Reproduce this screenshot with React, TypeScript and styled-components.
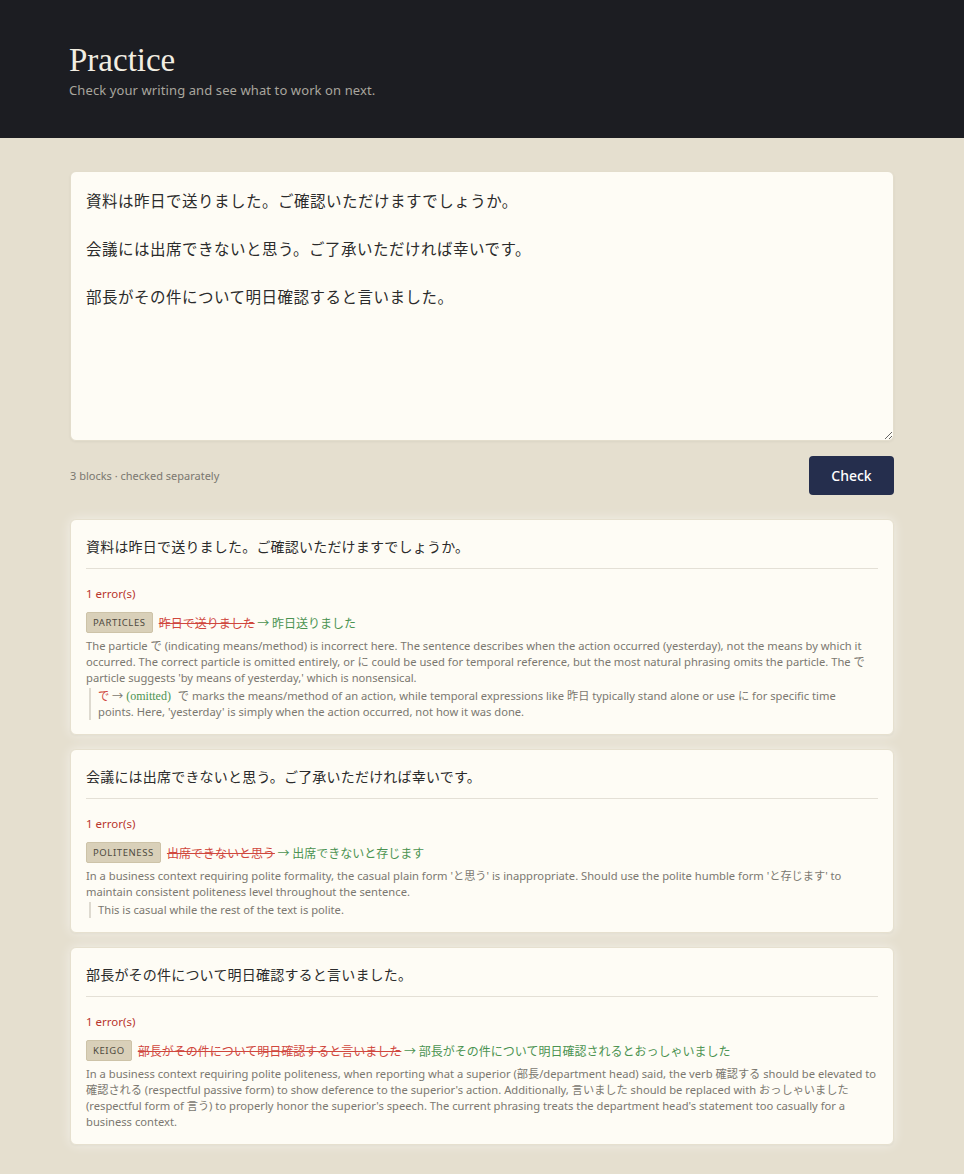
import { FC } from "react";
import styled, { createGlobalStyle } from "styled-components";

const GlobalStyle = createGlobalStyle`
  html, body {
    margin: 0;
    padding: 0;
    background: #e5dfcf;
  }
  body {
    font-family: "Noto Sans", "Noto Sans CJK JP", sans-serif;
    color: #333;
  }
`

interface Issue {
    category: string;
    wrong: string;
    right: string;
    explanation: string;
    note?: { from: string; to: string; text: string };
    plainNote?: string;
}

interface Block {
    sentence: string;
    issues: Issue[];
}

const blocks: Block[] = [
    {
        sentence: "資料は昨日で送りました。ご確認いただけますでしょうか。",
        issues: [
            {
                category: "Particles",
                wrong: "昨日で送りました",
                right: "昨日送りました",
                explanation:
                    "The particle で (indicating means/method) is incorrect here. The sentence describes when the action occurred (yesterday), not the means by which it occurred. The correct particle is omitted entirely, or に could be used for temporal reference, but the most natural phrasing omits the particle. The で particle suggests 'by means of yesterday,' which is nonsensical.",
                note: {
                    from: "で",
                    to: "(omitted)",
                    text: "で marks the means/method of an action, while temporal expressions like 昨日 typically stand alone or use に for specific time points. Here, 'yesterday' is simply when the action occurred, not how it was done.",
                },
            },
        ],
    },
    {
        sentence: "会議には出席できないと思う。ご了承いただければ幸いです。",
        issues: [
            {
                category: "Politeness",
                wrong: "出席できないと思う",
                right: "出席できないと存じます",
                explanation:
                    "In a business context requiring polite formality, the casual plain form 'と思う' is inappropriate. Should use the polite humble form 'と存じます' to maintain consistent politeness level throughout the sentence.",
                plainNote: "This is casual while the rest of the text is polite.",
            },
        ],
    },
    {
        sentence: "部長がその件について明日確認すると言いました。",
        issues: [
            {
                category: "Keigo",
                wrong: "部長がその件について明日確認すると言いました",
                right: "部長がその件について明日確認されるとおっしゃいました",
                explanation:
                    "In a business context requiring polite politeness, when reporting what a superior (部長/department head) said, the verb 確認する should be elevated to 確認される (respectful passive form) to show deference to the superior's action. Additionally, 言いました should be replaced with おっしゃいました (respectful form of 言う) to properly honor the superior's speech. The current phrasing treats the department head's statement too casually for a business context.",
            },
        ],
    },
];

const Header = styled.header`
  background: #1c1d22;
  height: 138px;
  box-sizing: border-box;
  padding: 41px 69px 0;
`

const Title = styled.h1`
  margin: 0;
  font-family: "Liberation Serif", "DejaVu Serif", serif;
  font-weight: 400;
  font-size: 33px;
  line-height: 38px;
  color: #f2eee3;
`

const Subtitle = styled.p`
  margin: 2px 0 0;
  font-size: 13px;
  letter-spacing: 0.1px;
  color: #a9a69e;
`

const Main = styled.main`
  padding: 33px 70px 33px;
  display: flex;
  flex-direction: column;
`

const Input = styled.textarea`
  box-sizing: border-box;
  width: 100%;
  height: 270px;
  padding: 16px 15px;
  border: 1px solid #e3ddcc;
  border-radius: 6px;
  background: #fefcf5;
  font-family: "Noto Sans CJK JP", sans-serif;
  font-size: 15.5px;
  letter-spacing: 0.5px;
  line-height: 24px;
  color: #2b2b2b;
  box-shadow: 0 1px 3px rgba(0, 0, 0, 0.05);
  outline: none;
`

const Toolbar = styled.div`
  display: flex;
  align-items: center;
  justify-content: space-between;
  margin-top: 15px;
`

const Hint = styled.span`
  font-size: 11px;
  color: #7a776f;
`

const CheckButton = styled.button`
  width: 85px;
  height: 39px;
  border: none;
  border-radius: 4px;
  background: #252e4d;
  color: #fff;
  font-family: "Noto Sans", sans-serif;
  font-size: 14px;
  font-weight: 500;
`

const Results = styled.div`
  display: flex;
  flex-direction: column;
  gap: 14px;
  margin-top: 24px;
`

const Card = styled.section`
  background: #fefcf5;
  border: 1px solid #e6e0cf;
  border-radius: 6px;
  padding: 15px 15px 14px;
  box-shadow: 0 0 12px rgba(255, 255, 255, 0.55), 0 1px 2px rgba(0, 0, 0, 0.05);
`

const Sentence = styled.div`
  font-family: "Noto Sans CJK JP", sans-serif;
  font-size: 14px;
  letter-spacing: 0.2px;
  line-height: 22px;
  color: #2b2b2b;
  padding-bottom: 11px;
  border-bottom: 1px solid #e4e0d6;
`

const ErrorCount = styled.div`
  margin-top: 17px;
  font-size: 11.5px;
  color: #b8352c;
`

const IssueRow = styled.div`
  margin-top: 11px;
`

const Headline = styled.div`
  display: flex;
  align-items: center;
  gap: 6px;
  font-family: "Noto Sans CJK JP", sans-serif;
  font-size: 12px;
`

const Badge = styled.span`
  display: inline-block;
  padding: 3px 6px;
  background: #d9d0b9;
  border: 1px solid #cdc3a8;
  border-radius: 2px;
  font-family: "Noto Sans", sans-serif;
  font-size: 9.5px;
  letter-spacing: 0.6px;
  text-transform: uppercase;
  color: #4f4a3f;
`

const Wrong = styled.span`
  color: #d0473d;
  text-decoration: line-through;
`

const Right = styled.span`
  color: #4b9351;
`

const Explanation = styled.p`
  margin: 5px 0 0;
  font-size: 11.2px;
  line-height: 16px;
  color: #7b7870;
`

const Note = styled.div`
  margin: 2px 0 0 3px;
  padding: 0 30px 0 7px;
  border-left: 2px solid #dedad0;
  font-size: 11.2px;
  line-height: 16px;
  color: #7b7870;
`

const NoteFrom = styled.span`
  color: #d0473d;
`

const NoteTo = styled.span`
  font-family: "Liberation Serif", serif;
  font-size: 12px;
  line-height: 16px;
  color: #4b9351;
  margin-right: 4px;
`

const IssueItem: FC<{ issue: Issue }> = ({ issue }) => (
    <IssueRow>
        <Headline>
            <Badge>{issue.category}</Badge>
            <span>
                <Wrong>{issue.wrong}</Wrong> <Right>→ {issue.right}</Right>
            </span>
        </Headline>
        <Explanation>{issue.explanation}</Explanation>
        {issue.note && (
            <Note>
                <NoteFrom>{issue.note.from}</NoteFrom> → <NoteTo>{issue.note.to}</NoteTo> {issue.note.text}
            </Note>
        )}
        {issue.plainNote && <Note>{issue.plainNote}</Note>}
    </IssueRow>
);

const App: FC = () => {
    const text = blocks.map((b) => b.sentence).join("\n\n");

    return (
        <>
            <GlobalStyle />
            <Header>
                <Title>Practice</Title>
                <Subtitle>Check your writing and see what to work on next.</Subtitle>
            </Header>
            <Main>
                <Input defaultValue={text} spellCheck={false} />
                <Toolbar>
                    <Hint>{blocks.length} blocks · checked separately</Hint>
                    <CheckButton>Check</CheckButton>
                </Toolbar>
                <Results>
                    {blocks.map((block) => (
                        <Card key={block.sentence}>
                            <Sentence>{block.sentence}</Sentence>
                            <ErrorCount>{block.issues.length} error(s)</ErrorCount>
                            {block.issues.map((issue) => (
                                <IssueItem key={issue.category} issue={issue} />
                            ))}
                        </Card>
                    ))}
                </Results>
            </Main>
        </>
    );
};

export default App;
